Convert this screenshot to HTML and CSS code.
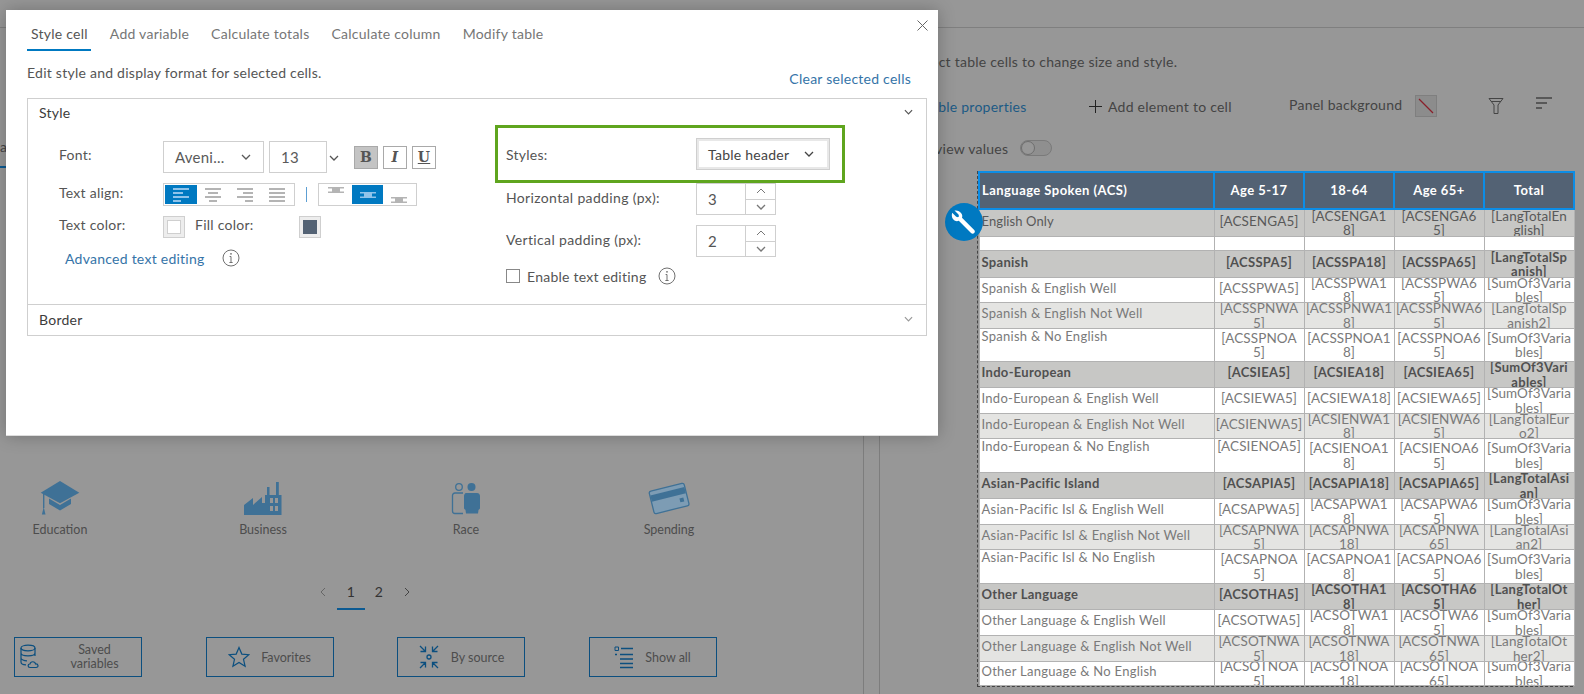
FILE: index.html
```html
<!DOCTYPE html>
<html lang="en">
<head>
<meta charset="utf-8">
<title>Style cell</title>
<link rel="stylesheet" href="styles.css">
</head>
<body>
<svg class="defs" aria-hidden="true">
  <symbol id="chev" viewBox="0 0 10 6"><path d="M1 1l4 4 4-4" fill="none" stroke="currentColor" stroke-width="1.3"/></symbol>
  <symbol id="chevup" viewBox="0 0 10 6"><path d="M1 5l4-4 4 4" fill="none" stroke="currentColor" stroke-width="1"/></symbol>
  <symbol id="info" viewBox="0 0 18 18"><circle cx="9" cy="9" r="8" fill="none" stroke="currentColor"/><path d="M9 7.5v6M7.6 7.5H9M7.4 13.5h3.2" fill="none" stroke="currentColor"/><circle cx="9" cy="4.8" r=".9" fill="currentColor"/></symbol>
  <symbol id="vband" viewBox="0 0 16 6"><path d="M0 0h16v1.5H0zM0 4.5h16V6H0zM4 1h8v4H4z" fill="currentColor"/></symbol>
</svg>

<div class="topbar"></div>
<div class="workspace">
  <section class="left">
    <p class="peek-a">ol</p>
    <p class="peek-b">a</p>
    <div class="cats">
      <div class="cat">
        <svg class="cat-ic" width="40" height="36" viewBox="0 0 40 36"><path d="M20 1l19.3 11.700L20 23.300.7 12.700z" fill="#3f7196"/><path d="M9 18.500l11 6.500 11-6.500v5.500L20 30.500 9 24z" fill="#3f7196"/><path d="M3.700 13v15" stroke="#3f7196" stroke-width="1.400"/><path d="M3.700 27l1.800 7.500h-3.600z" fill="#3f7196"/></svg>
        <span>Education</span>
      </div>
      <div class="cat">
        <svg class="cat-ic" width="38" height="36" viewBox="0 0 38 36"><path fill-rule="evenodd" d="M0 35V25l9-7v7l9-8v6l3 0V15h2V7h2.500v8H32V2h2.800v13h2.700v20zM26 18v5h3v-5zM31 18v5h3v-5zM26 26v5h3v-5zM31 26v5h3v-5z" fill="#3f7196"/></svg>
        <span>Business</span>
      </div>
      <div class="cat">
        <svg class="cat-ic" width="32" height="36" viewBox="0 0 32 36"><circle cx="9" cy="7" r="3.300" fill="none" stroke="#3f7196" stroke-width="1.300"/><circle cx="21.500" cy="7" r="4" fill="#3f7196"/><path d="M13 13H5c-1.500 0-2.500 1-2.500 2.500V31c0 1.500 1 2.500 2.500 2.500h8" fill="none" stroke="#3f7196" stroke-width="1.300"/><path d="M16 13h11c2 0 3 1.500 3 3v12c0 1-1 1.500-1.500 2l-.5 3.500H16l-.5-3.500c-.5-.5-1.500-1-1.500-2V16c0-1.500 1-3 2-3z" fill="#3f7196"/></svg>
        <span>Race</span>
      </div>
      <div class="cat">
        <svg class="cat-ic" width="44" height="36" viewBox="0 0 44 36"><g transform="rotate(-14 22 18)"><rect x="4" y="7" width="36" height="23" rx="2" fill="#7d9cb4" stroke="#3f7196" stroke-width="1.300"/><rect x="4.500" y="11" width="35" height="6.500" fill="#3f7196"/><rect x="32" y="21" width="4" height="4" fill="#3f7196"/></g></svg>
        <span>Spending</span>
      </div>
    </div>
    <nav class="pager">
      <svg class="pg-arrow" width="6" height="10" viewBox="0 0 6 10"><path d="M5 1L1 5l4 4" fill="none" stroke="#666"/></svg>
      <span class="pg on">1</span>
      <span class="pg">2</span>
      <svg class="pg-arrow" width="6" height="10" viewBox="0 0 6 10"><path d="M1 1l4 4-4 4" fill="none" stroke="#444"/></svg>
    </nav>
    <div class="modes">
      <button class="mode">
        <svg width="22" height="26" viewBox="0 0 22 26"><g fill="none" stroke="#0c4f7f" stroke-width="1.200"><ellipse cx="9" cy="4" rx="7" ry="2.800"/><path d="M2 4v14c0 1.500 2 2.800 5 2.800M16 4v8M2 9c0 1.500 3 2.800 7 2.800s7-1.300 7-2.800M2 14c0 1.500 3 2.800 6 2.800"/><path d="M11 23.500c-2.500 0-2.500-3.500 0-3.500 .5-3 5-3 5.500 0 3-.3 3.500 3.500.5 3.500z"/></g></svg>
        <span class="mode-2">Saved<br>variables</span>
      </button>
      <button class="mode">
        <svg width="22" height="22" viewBox="0 0 22 22"><path d="M11 1.500l2.800 6.600 7 .6-5.300 4.600 1.600 7L11 16.500l-6.100 3.800 1.600-7L1.200 8.700l7-.6z" fill="none" stroke="#0c4f7f" stroke-width="1.200"/></svg>
        <span>Favorites</span>
      </button>
      <button class="mode">
        <svg width="22" height="26" viewBox="0 0 22 26" fill="none" stroke="#0c4f7f" stroke-width="1.300"><circle cx="11" cy="13" r="2"/><path d="M2 2l5.500 5.500M7.500 2.500v5h-5M20 2l-5.500 5.500M14.500 2.500v5h5M2 24l5.500-5.500M7.500 23.500v-5h-5M20 24l-5.500-5.500M14.500 23.500v-5h5"/></svg>
        <span>By source</span>
      </button>
      <button class="mode">
        <svg width="20" height="24" viewBox="0 0 20 24"><path d="M1 2h3.500v3.500H1z" fill="none" stroke="#0c4f7f"/><path d="M7 3.500h12M6 9.500h13M6 14h13M6 18.500h13M6 22.500h13M1 9.500h2" stroke="#0c4f7f" stroke-width="1.300"/></svg>
        <span>Show all</span>
      </button>
    </div>
  </section>

  <div class="gutter"></div>

  <section class="right">
    <p class="hint">Select table cells to change size and style.</p>
    <div class="toolbar">
      <a class="props">Table properties</a>
      <span class="add"><svg width="13" height="13" viewBox="0 0 13 13"><path d="M6.500 0v13M0 6.500h13" stroke="#222" stroke-width="1"/></svg>Add element to cell</span>
      <span class="panelbg">Panel background</span>
      <span class="noswatch"><svg width="20" height="20" viewBox="0 0 20 20"><path d="M3 3l14 14" stroke="#8a1f2a" stroke-width="1.300"/></svg></span>
      <svg class="filter" width="16" height="16" viewBox="0 0 16 16"><path d="M1 .5h14L10 7v8.500H6V7zM3 3.500h10" fill="none" stroke="#444"/></svg>
      <svg class="sort" width="16" height="13" viewBox="0 0 16 13"><path d="M0 1h16M0 6h11M0 11h6" stroke="#444" stroke-width="1.500"/></svg>
    </div>
    <div class="preview"><span>Preview values</span><span class="toggle"><i></i></span></div>

    <div class="sheet">
      <table>
        <colgroup><col class="c-label"><col class="c-val"><col class="c-val"><col class="c-val"><col class="c-val"></colgroup>
        <thead>
          <tr><th><div class="left-t">Language Spoken (ACS)</div></th><th><div>Age 5-17</div></th><th><div>18-64</div></th><th><div>Age 65+</div></th><th><div>Total</div></th></tr>
        </thead>
        <tbody>
          <tr class="sec plain r27"><td><div>English Only</div></td><td><div>[ACSENGA5]</div></td><td><div>[ACSENGA1<br>8]</div></td><td><div>[ACSENGA6<br>5]</div></td><td><div>[LangTotalEn<br>glish]</div></td></tr>
          <tr class="white r14"><td><div></div></td><td><div></div></td><td><div></div></td><td><div></div></td><td><div></div></td></tr>
          <tr class="sec r27"><td><div>Spanish</div></td><td><div>[ACSSPA5]</div></td><td><div>[ACSSPA18]</div></td><td><div>[ACSSPA65]</div></td><td><div>[LangTotalSp<br>anish]</div></td></tr>
          <tr class="white r25"><td><div>Spanish &amp; English Well</div></td><td><div>[ACSSPWA5]</div></td><td><div>[ACSSPWA1<br>8]</div></td><td><div>[ACSSPWA6<br>5]</div></td><td><div>[SumOf3Varia<br>bles]</div></td></tr>
          <tr class="soft r26"><td><div>Spanish &amp; English Not Well</div></td><td><div>[ACSSPNWA<br>5]</div></td><td><div>[ACSSPNWA1<br>8]</div></td><td><div>[ACSSPNWA6<br>5]</div></td><td><div>[LangTotalSp<br>anish2]</div></td></tr>
          <tr class="white r33"><td><div class="top">Spanish &amp; No English</div></td><td><div>[ACSSPNOA<br>5]</div></td><td><div>[ACSSPNOA1<br>8]</div></td><td><div>[ACSSPNOA6<br>5]</div></td><td><div>[SumOf3Varia<br>bles]</div></td></tr>
          <tr class="sec r26"><td><div>Indo-European</div></td><td><div>[ACSIEA5]</div></td><td><div>[ACSIEA18]</div></td><td><div>[ACSIEA65]</div></td><td><div>[SumOf3Vari<br>ables]</div></td></tr>
          <tr class="white r26"><td><div>Indo-European &amp; English Well</div></td><td><div>[ACSIEWA5]</div></td><td><div>[ACSIEWA18]</div></td><td><div>[ACSIEWA65]</div></td><td><div>[SumOf3Varia<br>bles]</div></td></tr>
          <tr class="soft r25"><td><div>Indo-European &amp; English Not Well</div></td><td><div>[ACSIENWA5]</div></td><td><div>[ACSIENWA1<br>8]</div></td><td><div>[ACSIENWA6<br>5]</div></td><td><div>[LangTotalEur<br>o2]</div></td></tr>
          <tr class="white r34"><td><div class="top">Indo-European &amp; No English</div></td><td><div class="top">[ACSIENOA5]</div></td><td><div>[ACSIENOA1<br>8]</div></td><td><div>[ACSIENOA6<br>5]</div></td><td><div>[SumOf3Varia<br>bles]</div></td></tr>
          <tr class="sec r26"><td><div>Asian-Pacific Island</div></td><td><div>[ACSAPIA5]</div></td><td><div>[ACSAPIA18]</div></td><td><div>[ACSAPIA65]</div></td><td><div>[LangTotalAsi<br>an]</div></td></tr>
          <tr class="white r26"><td><div>Asian-Pacific Isl &amp; English Well</div></td><td><div>[ACSAPWA5]</div></td><td><div>[ACSAPWA1<br>8]</div></td><td><div>[ACSAPWA6<br>5]</div></td><td><div>[SumOf3Varia<br>bles]</div></td></tr>
          <tr class="soft r25"><td><div>Asian-Pacific Isl &amp; English Not Well</div></td><td><div>[ACSAPNWA<br>5]</div></td><td><div>[ACSAPNWA<br>18]</div></td><td><div>[ACSAPNWA<br>65]</div></td><td><div>[LangTotalAsi<br>an2]</div></td></tr>
          <tr class="white r34"><td><div class="top">Asian-Pacific Isl &amp; No English</div></td><td><div>[ACSAPNOA<br>5]</div></td><td><div>[ACSAPNOA1<br>8]</div></td><td><div>[ACSAPNOA6<br>5]</div></td><td><div>[SumOf3Varia<br>bles]</div></td></tr>
          <tr class="sec r26"><td><div>Other Language</div></td><td><div>[ACSOTHA5]</div></td><td><div>[ACSOTHA1<br>8]</div></td><td><div>[ACSOTHA6<br>5]</div></td><td><div>[LangTotalOt<br>her]</div></td></tr>
          <tr class="white r26"><td><div>Other Language &amp; English Well</div></td><td><div>[ACSOTWA5]</div></td><td><div>[ACSOTWA1<br>8]</div></td><td><div>[ACSOTWA6<br>5]</div></td><td><div>[SumOf3Varia<br>bles]</div></td></tr>
          <tr class="soft r26"><td><div>Other Language &amp; English Not Well</div></td><td><div>[ACSOTNWA<br>5]</div></td><td><div>[ACSOTNWA<br>18]</div></td><td><div>[ACSOTNWA<br>65]</div></td><td><div>[LangTotalOt<br>her2]</div></td></tr>
          <tr class="white r24"><td><div>Other Language &amp; No English</div></td><td><div>[ACSOTNOA<br>5]</div></td><td><div>[ACSOTNOA<br>18]</div></td><td><div>[ACSOTNOA<br>65]</div></td><td><div>[SumOf3Varia<br>bles]</div></td></tr>
        </tbody>
      </table>
      <span class="wrench"><svg width="26" height="26" viewBox="0 0 26 26"><path d="M3.500 1.500l4 4 .5 1.800-1 1-1.800-.5-4-4C.2 7 1 10 3.500 11.500c1.500.8 3 .8 4.300.3L20 24c1 1 2.300 1 3.200.1.900-.9.900-2.200 0-3.100L11 8.800c.5-1.500.3-3-.6-4.300C8.900 2 6 1 3.500 1.500z" fill="#fff"/></svg></span>
    </div>
  </section>
</div>

<div class="modal">
  <svg class="close" width="11" height="11" viewBox="0 0 11 11"><path d="M.5.500l10 10M10.500.500l-10 10" stroke="#666" stroke-width="1"/></svg>
  <div class="tabs">
    <span class="tab active">Style cell</span>
    <span class="tab">Add variable</span>
    <span class="tab">Calculate totals</span>
    <span class="tab">Calculate column</span>
    <span class="tab">Modify table</span>
  </div>
  <div class="desc">
    <span>Edit style and display format for selected cells.</span>
    <a class="clear">Clear selected cells</a>
  </div>
  <div class="accordion">
    <div class="acc-head"><b>Style</b><svg class="acc-chev" width="9" height="6"><use href="#chev"/></svg></div>
    <div class="acc-body">
      <div class="col-l">
        <div class="frow font-row">
          <label>Font:</label>
          <span class="sel font-sel">Aveni...<svg width="10" height="6"><use href="#chev"/></svg></span>
          <span class="sel size-sel">13</span>
          <svg class="size-chev" width="10" height="6"><use href="#chev"/></svg>
          <span class="fmt on fb">B</span><span class="fmt fi">I</span><span class="fmt fu">U</span>
        </div>
        <div class="frow align-row">
          <label>Text align:</label>
          <span class="seg seg-h">
            <i class="seg-btn on"><svg width="16" height="14" viewBox="0 0 16 14"><path d="M0 1h16M0 5h10M0 9h16M0 13h8" stroke="#8fc3ea" stroke-width="2"/></svg></i>
            <i class="seg-btn"><svg width="16" height="14" viewBox="0 0 16 14"><path d="M0 1h16M3 5h10M0 9h16M4 13h8" stroke="#b4b4b4" stroke-width="2"/></svg></i>
            <i class="seg-btn"><svg width="16" height="14" viewBox="0 0 16 14"><path d="M0 1h16M6 5h10M0 9h16M8 13h8" stroke="#b4b4b4" stroke-width="2"/></svg></i>
            <i class="seg-btn"><svg width="16" height="14" viewBox="0 0 16 14"><path d="M0 1h16M0 5h16M0 9h16M0 13h16" stroke="#b4b4b4" stroke-width="2"/></svg></i>
          </span>
          <span class="divider"></span>
          <span class="seg seg-v">
            <i class="seg-btn vt"><svg width="16" height="6"><use href="#vband"/></svg></i>
            <i class="seg-btn on vm"><svg width="16" height="6"><use href="#vband"/></svg></i>
            <i class="seg-btn vb"><svg width="16" height="6"><use href="#vband"/></svg></i>
          </span>
        </div>
        <div class="frow color-row">
          <label>Text color:</label>
          <span class="swatch"><i class="sw-white"></i></span>
          <span class="fill-label">Fill color:</span>
          <span class="swatch"><i class="sw-slate"></i></span>
        </div>
        <div class="adv"><a>Advanced text editing</a><svg class="ic-info" width="18" height="18"><use href="#info"/></svg></div>
      </div>
      <div class="col-r">
        <div class="styles-box">
          <label>Styles:</label>
          <span class="style-sel">Table header<svg width="10" height="6"><use href="#chev"/></svg></span>
        </div>
        <div class="prow">
          <label>Horizontal padding (px):</label>
          <span class="num"><em>3</em><span class="spin"><i><svg width="10" height="6"><use href="#chevup"/></svg></i><i><svg width="10" height="6"><use href="#chev"/></svg></i></span></span>
        </div>
        <div class="prow">
          <label>Vertical padding (px):</label>
          <span class="num"><em>2</em><span class="spin"><i><svg width="10" height="6"><use href="#chevup"/></svg></i><i><svg width="10" height="6"><use href="#chev"/></svg></i></span></span>
        </div>
        <div class="check"><i class="box"></i><span>Enable text editing</span><svg class="ic-info" width="18" height="18"><use href="#info"/></svg></div>
      </div>
    </div>
    <div class="acc-foot"><b>Border</b><svg class="acc-chev" width="9" height="6"><use href="#chev"/></svg></div>
  </div>
</div>
</body>
</html>
```
FILE: styles.css
```css
* { box-sizing: border-box; }
html, body { margin: 0; height: 694px; overflow: hidden; }
body { position: relative; background: #979797; font-family: "Lato", "Open Sans", sans-serif; font-size: 14px; letter-spacing: .25px; color: #444; }
.defs { position: absolute; width: 0; height: 0; }
p { margin: 0; }
i, em { font-style: normal; }
svg { display: block; flex: none; }

.topbar { height: 28px; border-bottom: 1px solid #7f7f7f; }
.workspace { display: flex; height: 666px; }
.left { width: 864px; border-right: 1px solid #7d7d7d; }
.gutter { width: 15px; }
.right { flex: 1; border-left: 1px solid #7d7d7d; }

/* left pane */
.peek-a { margin: 25px 0 0 -12px; width: 30px; height: 20px; }
.peek-b { margin: 65px 0 0 -8px; width: 30px; padding-left: 8px; height: 30px; border-bottom: 2px solid #0c5a92; }
.cats { display: flex; gap: 83px; margin-top: 312px; }
.cat { width: 120px; display: flex; flex-direction: column; align-items: center; font-size: 12.500px; letter-spacing: 0; color: #4d4d4d; }
.cat-ic { height: 36px; margin-bottom: 6px; }
.pager { display: flex; align-items: center; justify-content: center; width: 120px; margin: 43px 0 0 305px; gap: 0; }
.pg { width: 28px; height: 30px; line-height: 24px; text-align: center; font-size: 14px; color: #333; }
.pg.on { border-bottom: 2px solid #0c5a92; }
.pg-arrow { margin: 0 11px 6px; }
.modes { display: flex; gap: 63.500px; margin: 27px 0 0 14px; }
.mode { width: 128px; height: 40px; display: flex; align-items: center; justify-content: center; gap: 11px; background: none; border: 1px solid #0c4f7f; padding: 0 4px; font: inherit; font-size: 12.500px; letter-spacing: 0; color: #4d4d4d; }
.mode-2 { flex: 1; text-align: center; line-height: 14px; }

/* right pane */
.hint { margin: 25px 0 0 32px; height: 22px; }
.toolbar { display: flex; align-items: center; margin-top: 20px; height: 22px; padding-left: 44px; }
.props { color: #1d5a85; width: 165px; }
.add { display: flex; align-items: center; gap: 6px; width: 200px; color: #444; }
.panelbg { width: 126px; margin-bottom: 4px; }
.noswatch { width: 22px; height: 22px; border: 1px solid #7f7f7f; background: #8c8c8c; display: flex; align-items: center; justify-content: center; }
.filter { margin: 0 0 0 51px; }
.sort { margin: 0 0 6px 32px; }
.preview { display: flex; align-items: center; gap: 12px; margin-top: 23px; padding-left: 34px; height: 16px; }
.toggle { width: 32px; height: 16px; border-radius: 8px; border: 1px solid #7a7a7a; background: #8f8f8f; display: block; }
.toggle i { display: block; width: 14px; height: 14px; border-radius: 50%; border: 1px solid #6e6e6e; background: #979797; }

.sheet { position: relative; width: 596px; margin: 15px 0 0 97px; border: 1px dashed #444; border-top: 0; }
table { border-collapse: collapse; table-layout: fixed; width: 595px; font-size: 13px; line-height: 15px; letter-spacing: .27px; }
.c-label { width: 235px; }
.c-val { width: 90px; }
th, td { padding: 0; border: 1px solid #b2b2b2; overflow: hidden; }
th { background: #536274; color: #fff; border: 2px solid #0c8de6; font-weight: 700; letter-spacing: .45px; }
th div { height: 35px; display: flex; align-items: center; justify-content: center; }
th .left-t { justify-content: flex-start; padding-left: 2px; }
td div { display: flex; align-items: center; justify-content: center; text-align: center; white-space: nowrap; overflow: hidden; padding-bottom: 4px; color: #7a7a7a; font-size: 13.500px; letter-spacing: .1px; }
td div:has(br) { padding-bottom: 0; line-height: 14.500px; }
td:first-child div { justify-content: flex-start; text-align: left; padding-left: 2px; font-size: 13px; letter-spacing: .27px; }
td div.top { align-items: flex-start; padding-bottom: 0; }
.white td { background: #fff; }
.soft td { background: #e4e4e2; }
.sec td { background: #c7c7c5; }
.sec td div { color: #505050; font-weight: 700; font-size: 13px; letter-spacing: .3px; }
.sec.plain td div { color: #595959; font-weight: 400; font-size: 13.500px; letter-spacing: .1px; }
.sec.plain td:first-child div { font-size: 13px; }
.r14 td div { height: 13px; padding-bottom: 0; }
.r24 td div { height: 23px; }
.r25 td div { height: 24px; }
.r26 td div { height: 25px; }
.r27 td div { height: 26px; }
.r33 td div { height: 32px; }
.r34 td div { height: 33px; }
.wrench { position: absolute; left: -33px; top: 32px; width: 38px; height: 38px; border-radius: 50%; background: #0079c1; display: flex; align-items: center; justify-content: center; }

/* modal */
.modal { position: absolute; left: 6px; top: 10px; width: 932px; height: 426px; background: #fff; border-bottom: 1px solid #ddd; box-shadow: 0 0 16px rgba(0,0,0,.25); padding: 0 11px 0 21px; color: #555; }
.close { position: absolute; top: 10px; right: 10px; }
.tabs { display: flex; gap: 15px; padding-top: 13px; }
.tab { padding: 0 3px 0 4px; height: 28px; line-height: 22px; color: #767676; border-bottom: 2px solid transparent; }
.tab.active { color: #555; border-bottom-color: #0079c1; }
.desc { display: flex; justify-content: space-between; padding: 13px 16px 0 0; height: 47px; color: #555; }
.clear { color: #3574a8; padding-top: 6px; }
.accordion { border: 1px solid #cfcfcf; height: 238px; position: relative; }
.acc-head { height: 26px; padding: 5px 0 0 11px; display: flex; justify-content: space-between; color: #3c3c3c; }
.acc-head b, .acc-foot b { font-weight: 400; }
.acc-chev { margin: 5px 13px 0 0; color: #555; }
.acc-foot .acc-chev { color: #999; }
.acc-body { display: flex; height: 179px; }
.col-l { width: 467px; padding: 16px 0 0 31px; }
.frow { display: flex; }
.frow label { width: 104px; padding-bottom: 5px; }
.font-row { align-items: center; height: 32px; }
.sel { height: 32px; border: 1px solid #cfcfcf; display: flex; align-items: center; justify-content: space-between; padding: 0 12px 0 11px; font-size: 15px; color: #5a5a5a; }
.font-sel { width: 101px; margin-right: 5px; }
.size-sel { width: 58px; }
.size-chev { margin: 2px 15px 0 2px; }
.fmt { width: 24px; height: 23px; border: 1px solid #a9a9a9; margin-right: 5px; display: flex; align-items: center; justify-content: center; font-family: "DejaVu Serif", serif; font-weight: 700; font-size: 14px; color: #555; }
.fmt.on { background: #c4c4c4; }
.fi { font-style: italic; }
.fu { text-decoration: underline; }
.align-row { align-items: center; margin-top: 10px; height: 23px; }
.seg { height: 23px; border: 1px solid #cfcfcf; display: flex; padding: 1px; }
.seg-h { width: 132px; }
.seg-v { width: 99px; }
.seg-btn { flex: 1; display: flex; align-items: center; justify-content: center; color: #b4b4b4; }
.seg-btn.on { background: #0079c1; color: #8fc3ea; }
.seg-btn.vt { align-items: flex-start; padding-top: 2px; }
.seg-btn.vb { align-items: flex-end; padding-bottom: 1px; }
.divider { width: 1px; height: 15px; background: #5d9fd3; margin: 0 11px; }
.color-row { align-items: center; margin-top: 10px; height: 22px; }
.swatch { width: 22px; height: 22px; background: #ededed; border: 1px solid #cfcfcf; padding: 3px; display: block; }
.swatch i { display: block; height: 100%; }
.sw-white { background: #fff; border: 1px solid #cfcfcf; }
.sw-slate { background: #536274; }
.fill-label { width: 114px; padding: 0 0 5px 10px; }
.adv { display: flex; align-items: center; margin: 11px 0 0 6px; gap: 17px; height: 18px; }
.adv a { color: #3574a8; }
.ic-info { color: #707070; }
.col-r { width: 400px; }
.styles-box { width: 350px; height: 58px; border: 3px solid #5fa51e; display: flex; align-items: center; padding-left: 8px; }
.styles-box label { width: 190px; }
.style-sel { width: 134px; height: 32px; border: 1px solid #cfcfcf; box-shadow: inset 0 0 0 2px #e8e8e8; display: flex; align-items: center; justify-content: space-between; padding: 0 15px 0 11px; color: #444; font-size: 14px; }
.prow { display: flex; align-items: center; padding-left: 11px; height: 32px; margin-bottom: 10px; }
.prow label { width: 190px; padding-bottom: 4px; letter-spacing: .35px; }
.num { width: 80px; height: 32px; border: 1px solid #cfcfcf; display: flex; }
.num em { flex: 1; padding-left: 11px; line-height: 30px; font-size: 15px; color: #555; }
.spin { width: 30px; border-left: 1px solid #cfcfcf; display: flex; flex-direction: column; }
.spin i { flex: 1; display: flex; align-items: center; justify-content: center; color: #777; }
.spin i + i { border-top: 1px solid #cfcfcf; }
.check { display: flex; align-items: center; padding-left: 11px; margin-top: 3px; height: 18px; }
.box { width: 14px; height: 14px; border: 1px solid #888; margin-right: 7px; }
.check svg { margin-left: 12px; }
.acc-foot { height: 31px; border-top: 1px solid #cfcfcf; padding: 6px 0 0 11px; display: flex; justify-content: space-between; color: #3c3c3c; }
```
